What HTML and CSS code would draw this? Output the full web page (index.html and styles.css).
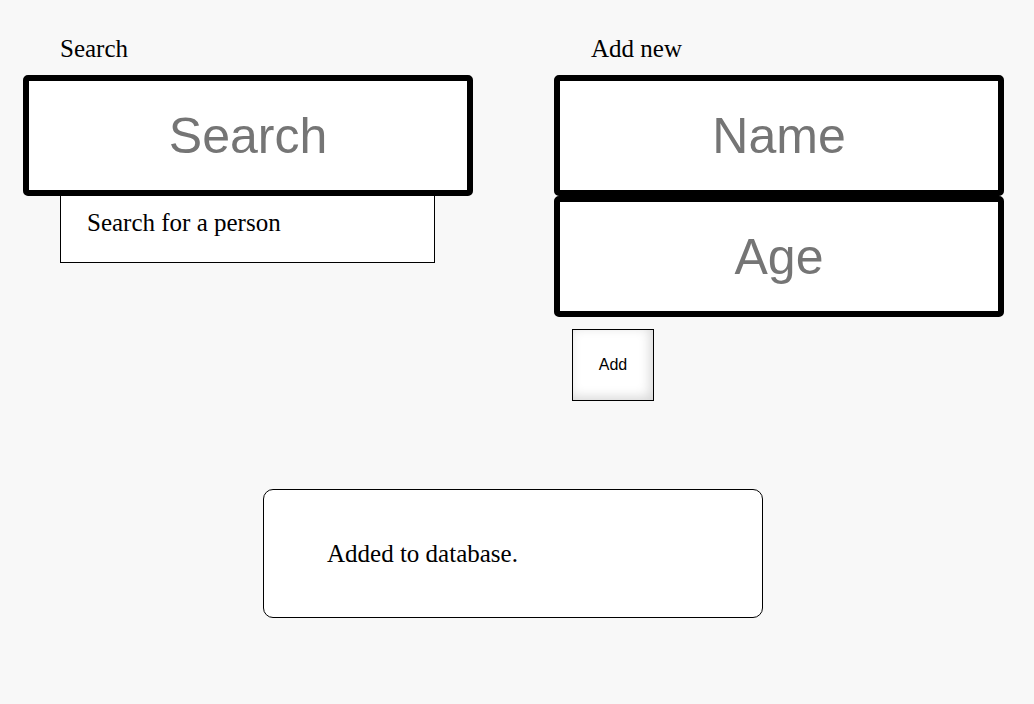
FILE: index.html
```html
<!DOCTYPE html>
<html lang="en">
<head>
  <meta charset="UTF-8">
  <meta name="viewport" content="width=device-width, initial-scale=1.0">
  <title>People</title>
  <link rel="stylesheet" href="styles.css">
</head>
<body>
  <div class="main">
    <div class="col">
      <h3 class="col-title">Search</h3>
      <input type="text" class="field" placeholder="Search">
      <div class="results">Search for a person</div>
    </div>
    <div class="col">
      <h3 class="col-title">Add new</h3>
      <input type="text" class="field" placeholder="Name">
      <input type="text" class="field" placeholder="Age">
      <button class="add-btn">Add</button>
    </div>
  </div>
  <div class="notice-wrap">
    <div class="notice">Added to database.</div>
  </div>
</body>
</html>
```
FILE: styles.css
```css
body {
  margin: 0;
  background: #f8f8f8;
  font-family: 'Liberation Serif', 'Times New Roman', serif;
  color: #000;
}
.main {
  display: flex;
  align-items: flex-start;
  gap: 81px;
  padding: 35px 0 0 23px;
}
.col {
  width: 450px;
}
.col-title {
  font-size: 25px;
  font-weight: normal;
  line-height: 28px;
  margin: 0 0 12px 37px;
}
.field {
  display: block;
  position: relative;
  z-index: 1;
  width: 450px;
  height: 121px;
  box-sizing: border-box;
  margin: 0;
  border: 6px solid #000;
  border-radius: 5px;
  background: #fff;
  font-family: 'Liberation Sans', Arial, sans-serif;
  font-size: 50px;
  text-align: center;
  outline: none;
}
.field::placeholder {
  color: #757575;
}
.results {
  width: 375px;
  box-sizing: border-box;
  margin: -13px 0 0 37px;
  padding: 25px 26px;
  border: 1px solid #000;
  background: #fff;
  font-size: 25px;
  line-height: 28px;
}
.add-btn {
  display: block;
  width: 82px;
  height: 72px;
  margin: 12px 0 0 18px;
  border: 1px solid #000;
  border-radius: 0;
  background: #fff;
  box-shadow: inset -3px -3px 12px rgba(0, 0, 0, 0.16);
  font-family: 'Liberation Sans', Arial, sans-serif;
  font-size: 16px;
  color: #000;
}
.notice-wrap {
  display: flex;
  justify-content: center;
  padding-right: 8px;
  margin-top: 88px;
}
.notice {
  display: flex;
  align-items: center;
  width: 500px;
  height: 129px;
  box-sizing: border-box;
  padding-left: 63px;
  border: 1px solid #000;
  border-radius: 10px;
  background: #fff;
  font-size: 25px;
}
```
